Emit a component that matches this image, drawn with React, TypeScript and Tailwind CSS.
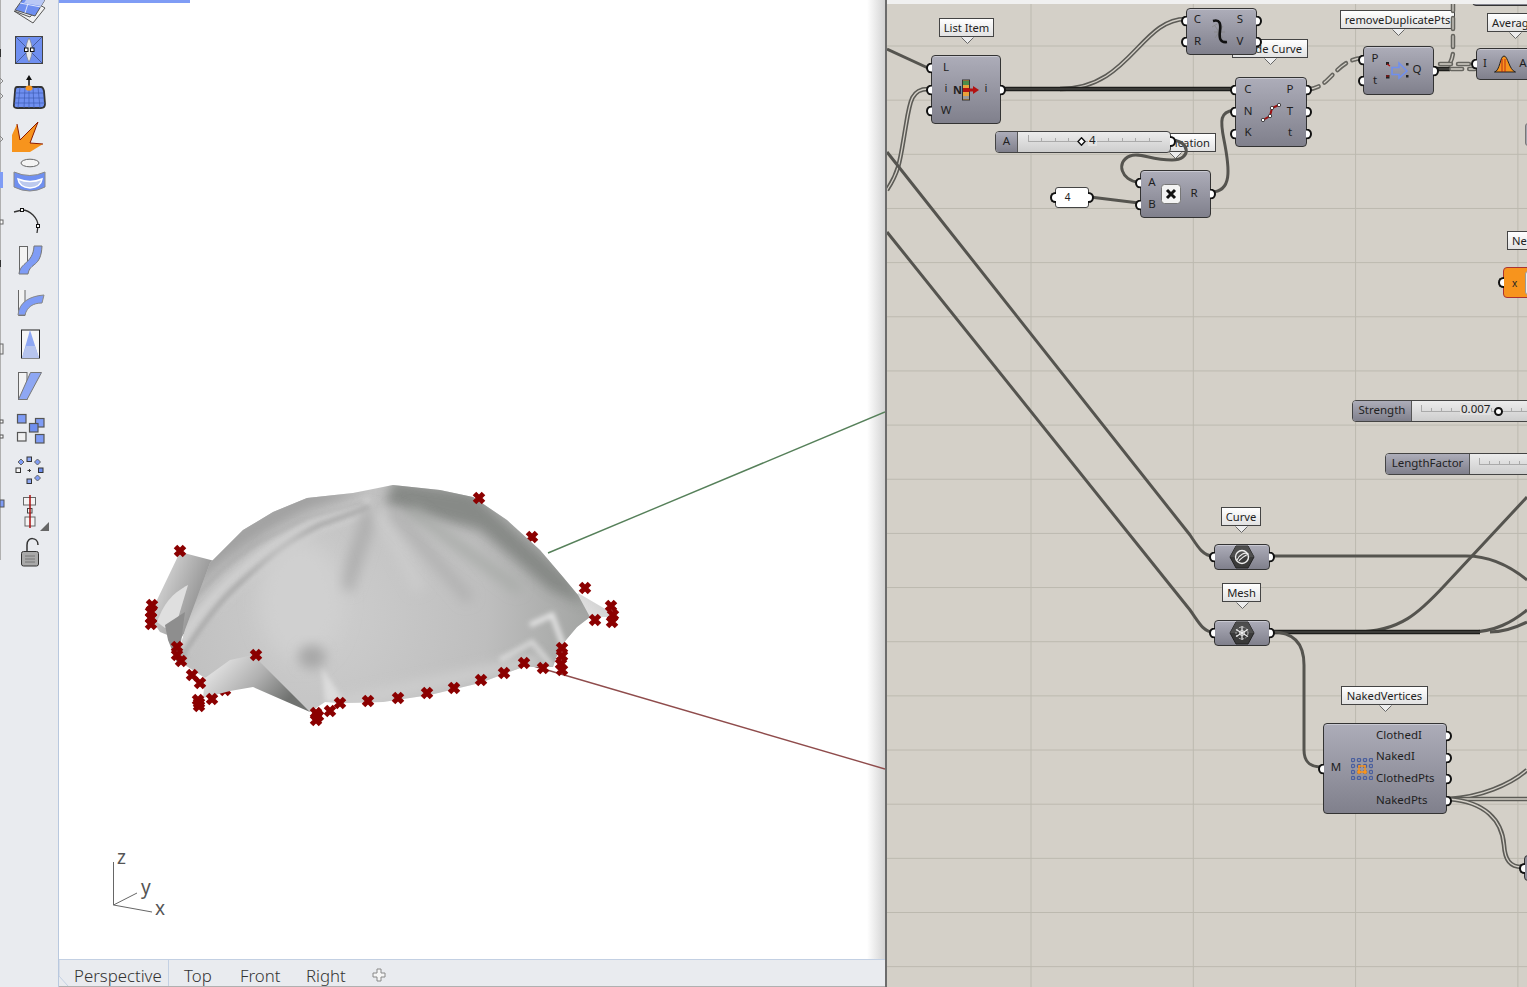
import React from "react";

const FONT = "font-['Noto_Sans','Open_Sans',sans-serif]";

// ---------- toolbar icons, drawn in page coordinates (viewBox follows the slot) ----------
const toolIcons: React.ReactNode[] = [
  <g key="0" stroke="#555" strokeWidth="1">
    <path d="M14 11L33 23L45 8L40 5L30 17L14 11Z" fill="#f2f2f2" />
    <path d="M15 10L25 -4L46 -2L35 16Z" fill="#6f8ff0" />
    <path d="M20 3L41 7M30 -3L25 13" stroke="#dfe6fb" />
    <path d="M28 -3L46 -2L41 6L24 3Z" fill="#b9c8f5" stroke="none" />
  </g>,
  <g key="1">
    <rect x="15.5" y="36.5" width="27" height="27" fill="#6f8ff0" stroke="#444" />
    <path d="M16 37L42 63M42 37L16 63" stroke="#3e4f86" strokeWidth="0.8" />
    <path d="M29 38C33 45 33 55 29 62C25 55 25 45 29 38Z" fill="#e8e8e8" stroke="#777" strokeWidth="0.6" />
    <rect x="24.5" y="48" width="3.5" height="3.5" fill="#fff" stroke="#111" />
    <rect x="30.5" y="48" width="3.5" height="3.5" fill="#fff" stroke="#111" />
  </g>,
  <g key="2">
    <path d="M29 88V79" stroke="#111" strokeWidth="1.5" />
    <path d="M26 80L29 75L32 80Z" fill="#111" />
    <path d="M17 87H41Q43 87 44 91L45 104Q45 108 41 108H17Q13 108 14 104L15 91Q15 87 17 87Z" fill="#6f8ff0" stroke="#333" strokeWidth="1.8" />
    <path d="M15 93H43M15 98H44M14 103H45M20 87L18 108M25 87L24 108M29 87V108M33 87L34 108M38 87L40 108" stroke="#3e5bb5" strokeWidth="0.7" />
    <ellipse cx="29" cy="88" rx="3.5" ry="2.6" fill="#f7941d" />
  </g>,
  <g key="3">
    <path d="M12 152V135L17 124L20 140L38 122L30 143L43 144L30 152Z" fill="#f7941d" />
    <path d="M17 124L20 140L38 122L30 143L43 144" fill="none" stroke="#8d1a00" strokeWidth="1" />
  </g>,
  <g key="4">
    <ellipse cx="30" cy="163" rx="9" ry="3.8" fill="#f4f4f4" stroke="#666" />
    <path d="M14 172Q30 179 45 172V187Q30 195 14 187Z" fill="#6f8ff0" stroke="#888" />
    <path d="M18 179Q30 184 42 179Q41 187 30 188Q19 187 18 179Z" fill="#bcc9ee" stroke="#fff" strokeWidth="1.5" />
  </g>,
  <g key="5">
    <path d="M14 212L22 210C30 210 38 218 38 226L37 233" fill="none" stroke="#333" strokeWidth="1.3" />
    <rect x="20.5" y="208.5" width="3" height="3" fill="#fff" stroke="#111" />
    <rect x="36.5" y="224.5" width="3" height="3" fill="#fff" stroke="#111" />
  </g>,
  <g key="6">
    <rect x="19.5" y="246.5" width="8" height="27" fill="#f3f3f3" stroke="#666" />
    <path d="M19 274C20 262 33 264 34 246H42C41 268 30 262 28 274Z" fill="#7f9cf5" stroke="#777" />
  </g>,
  <g key="7">
    <path d="M18.5 290V315.5H25V290" fill="#f3f3f3" stroke="#666" />
    <path d="M18 315C19 302 30 296 44 295L42 303C33 303 27 307 25 315Z" fill="#7f9cf5" stroke="#888" />
  </g>,
  <g key="8">
    <rect x="21.5" y="330" width="18" height="28" fill="#f5f5f5" stroke="#222" />
    <path d="M30 330L22 358H39Z" fill="#8ea7f3" />
    <path d="M26 346H35L39 358H22Z" fill="#b6c4ee" />
  </g>,
  <g key="9">
    <rect x="18.5" y="372.5" width="8.5" height="27" fill="#f3f3f3" stroke="#666" />
    <path d="M30.5 372.5H41.5L27 399.5H18.5Z" fill="#8ea7f3" stroke="#777" />
  </g>,
  <g key="10" stroke="#555" strokeWidth="1.2">
    <rect x="17.5" y="414.5" width="8.5" height="8.5" fill="#7f9cf5" />
    <rect x="35.5" y="418.5" width="8.5" height="8.5" fill="#7f9cf5" />
    <rect x="29.5" y="423.5" width="8.5" height="8.5" fill="#6f8ff0" />
    <rect x="17.5" y="432.5" width="8.5" height="8.5" fill="#f0f0f0" />
    <rect x="35.5" y="434.5" width="8.5" height="8.5" fill="#7f9cf5" />
  </g>,
  <g key="11" stroke="#333" strokeWidth="1">
    <rect x="27" y="457" width="4.5" height="4.5" fill="#8ea7f3" />
    <rect x="38.5" y="468" width="4.5" height="4.5" fill="#6f8ff0" />
    <rect x="27" y="479" width="4.5" height="4.5" fill="#8ea7f3" />
    <rect x="16" y="468" width="4.5" height="4.5" fill="#f5f5f5" />
    <path d="M21 459L24 462L21 465L18 462ZM37.500 459L40.500 462L37.500 465L34.500 462ZM37.500 475L40.500 478L37.500 481L34.500 478Z" fill="#7f9cf5" stroke="#666" />
    <path d="M27.500 470.500H31M29.500 469V472" />
  </g>,
  <g key="12">
    <rect x="23.500" y="497.500" width="12" height="7.500" fill="#f4f4f4" stroke="#666" />
    <rect x="27.500" y="508.500" width="4.500" height="4.500" fill="#f4f4f4" stroke="#444" />
    <rect x="25" y="517" width="10" height="9" fill="#f4f4f4" stroke="#666" />
    <path d="M30 495V528" stroke="#a11" strokeWidth="1.5" />
    <path d="M40 531H49V522Z" fill="#666" />
  </g>,
  <g key="13">
    <path d="M27 551L27 545C27 536 38 537 38 545" fill="none" stroke="#333" strokeWidth="1.5" />
    <rect x="21.500" y="551.500" width="17" height="14.500" rx="2" fill="#a9a9a9" stroke="#333" />
    <path d="M25 556H35M25 559H35M25 562H35" stroke="#777" />
  </g>,
];

function Toolbar() {
  return (
    <div className="flex w-[59px] shrink-0 border-r border-[#b9c8de] bg-[#e9ebef]">
      <div className="w-[8px] shrink-0">
        <svg width="8" height="560" viewBox="0 0 8 560">
          <rect x="0" y="0" width="1" height="560" fill="#b0b0b0" />
          <rect x="0" y="172" width="3" height="16" fill="#7f9cf5" />
          <rect x="0" y="49" width="1" height="8" fill="#333" />
          <path d="M0 78L3 81L0 84M0 93L3 96L0 99M0 136L3 139L0 142" fill="none" stroke="#888" />
          <rect x="0" y="220" width="3" height="4" fill="#fff" stroke="#666" />
          <rect x="0" y="260" width="1" height="7" fill="#333" />
          <rect x="0" y="344" width="3" height="10" fill="#eee" stroke="#666" />
          <rect x="0" y="420" width="3" height="3" fill="#fff" stroke="#555" />
          <rect x="0" y="435" width="3" height="3" fill="#fff" stroke="#555" />
          <rect x="0" y="500" width="4" height="7" fill="#7f9cf5" stroke="#555" />
        </svg>
      </div>
      <div className="-mt-[12px] flex flex-col">
        {toolIcons.map((icon, i) => (
          <svg key={i} width="42" height="42" viewBox={`8 ${-12 + i * 42} 42 42`} className="overflow-hidden">
            {icon}
          </svg>
        ))}
      </div>
    </div>
  );
}

// ---------- the mesh in the perspective view ----------
const crossesBack = [[532, 537], [168, 627], [225, 690]];
const crosses = [
  [479, 498], [585, 588], [611, 606], [613, 615], [612, 622], [595, 620], [180, 551],
  [152, 605], [151, 612], [151, 618], [151, 624], [177, 647], [177, 655], [181, 661], [192, 675],
  [200, 683], [212, 699], [198, 700], [199, 706], [199, 703], [256, 655], [316, 713], [316, 720],
  [318, 716], [330, 711], [340, 703], [368, 701], [398, 698], [427, 693], [454, 688], [481, 680],
  [504, 673], [524, 663], [543, 668], [562, 648], [562, 656], [561, 664], [562, 670],
];

const domeOutline =
  "M177 660L185 630L210 563L243 530L273 512L307 498L353 493L393 485L440 490L473 497L507 520L540 550L563 577L578 595L590 617L577 627L560 647L553 667L523 667L480 683L430 695L383 702L343 703L325 702L310 712L253 660L205 678Z";

function Cross({ x, y }: { x: number; y: number }) {
  return <path d={`M${x - 4.5} ${y - 4.5}L${x + 4.5} ${y + 4.5}M${x - 4.5} ${y + 4.5}L${x + 4.5} ${y - 4.5}`} stroke="#8b0000" strokeWidth="5" />;
}

function Mesh() {
  return (
    <svg width="826" height="958" viewBox="59 0 826 958" className="absolute left-0 top-0">
      <defs>
        <radialGradient id="domeBase" gradientUnits="userSpaceOnUse" cx="320" cy="615" r="280">
          <stop offset="0" stopColor="#cecece" />
          <stop offset="0.6" stopColor="#bebebe" />
          <stop offset="1" stopColor="#a0a2a0" />
        </radialGradient>
        <linearGradient id="flapLow" gradientUnits="userSpaceOnUse" x1="228" y1="655" x2="282" y2="706">
          <stop offset="0" stopColor="#dedede" />
          <stop offset="0.5" stopColor="#b0b0b0" />
          <stop offset="1" stopColor="#707270" />
        </linearGradient>
        <linearGradient id="flapBack" gradientUnits="userSpaceOnUse" x1="160" y1="570" x2="210" y2="590">
          <stop offset="0" stopColor="#d6d6d6" />
          <stop offset="1" stopColor="#8f8f8f" />
        </linearGradient>
        <linearGradient id="flapRight" gradientUnits="userSpaceOnUse" x1="560" y1="640" x2="605" y2="600">
          <stop offset="0" stopColor="#b5b5b5" />
          <stop offset="0.6" stopColor="#e0e0e0" />
          <stop offset="1" stopColor="#cfcfcf" />
        </linearGradient>
        <filter id="wide" x="-40%" y="-40%" width="180%" height="180%"><feGaussianBlur stdDeviation="10" /></filter>
        <filter id="soft" x="-40%" y="-40%" width="180%" height="180%"><feGaussianBlur stdDeviation="6" /></filter>
        <filter id="mid" x="-40%" y="-40%" width="180%" height="180%"><feGaussianBlur stdDeviation="2.500" /></filter>
        <clipPath id="domeClip"><path d={domeOutline} /></clipPath>
      </defs>

      <path d="M548 553L885 412" stroke="#56805a" strokeWidth="1.4" />
      <path d="M530 665L885 769" stroke="#8f4c4c" strokeWidth="1.4" />

      {crossesBack.map(([x, y], i) => <Cross key={i} x={x} y={y} />)}

      <path d="M180 552L230 565L205 600L180 640L160 632L153 622L157 600Z" fill="url(#flapBack)" />
      <path d="M157 622C165 600 175 592 188 585L176 625L165 628Z" fill="#dfdfdf" />
      <path d="M165 625L185 612L178 665L168 640Z" fill="#8e8e8e" />
      <path d="M578 593L607 610L610 617L590 617L577 627L560 647L553 640Z" fill="url(#flapRight)" />

      <path d={domeOutline} fill="url(#domeBase)" />
      <g clipPath="url(#domeClip)">
        <path d="M393 480L473 492L570 580L585 605L550 590L480 530L420 515L385 505Z" fill="#848784" filter="url(#soft)" opacity="0.95" />
        <path d="M165 620C190 590 235 545 310 510L365 492L300 488L210 540Z" fill="#a2a2a2" filter="url(#soft)" />
        <path d="M182 650C200 610 250 565 315 525L372 505" fill="none" stroke="#cfcfcf" strokeWidth="18" filter="url(#mid)" />
        <path d="M173 627C190 600 225 562 263 540L310 517L363 502" fill="none" stroke="#9e9e9e" strokeWidth="3" filter="url(#mid)" opacity="0.7" />
        <path d="M180 660C192 640 215 605 240 583C265 560 295 537 320 525L370 507" fill="none" stroke="#a2a2a2" strokeWidth="5" filter="url(#mid)" opacity="0.9" />
        <path d="M372 508L345 590" stroke="#b0b0b0" strokeWidth="16" filter="url(#soft)" />
        <path d="M378 510L420 590" stroke="#cbcbcb" strokeWidth="14" filter="url(#soft)" />
        <path d="M392 510L470 600" stroke="#b2b2b2" strokeWidth="12" filter="url(#soft)" />
        <path d="M410 510L520 590" stroke="#a9aca9" strokeWidth="10" filter="url(#soft)" />
        <ellipse cx="300" cy="600" rx="40" ry="60" fill="#d0d0d0" filter="url(#wide)" />
        <ellipse cx="312" cy="657" rx="14" ry="12" fill="#a8a8a8" filter="url(#soft)" />
        <path d="M325 702L322 668L345 702Z" fill="#dcdcdc" filter="url(#mid)" />
        <path d="M340 703L540 660" stroke="#cecece" strokeWidth="12" filter="url(#soft)" />
        <path d="M500 660L532 642L553 667" stroke="#e4e4e4" strokeWidth="5" fill="none" filter="url(#mid)" opacity="0.7" />
        <path d="M530 625L552 615L565 650" stroke="#e4e4e4" strokeWidth="5" fill="none" filter="url(#mid)" />
      </g>
      <path d="M253 655L310 712L253 687L230 691L203 698L205 678L230 660Z" fill="url(#flapLow)" />

      {crosses.map(([x, y], i) => <Cross key={i} x={x} y={y} />)}

      <g stroke="#666" strokeWidth="1" fill="none">
        <path d="M113.500 862V905L137 893M113.500 905L152 912" />
      </g>
    </svg>
  );
}

function Viewport() {
  return (
    <div className="flex w-[826px] shrink-0 flex-col">
      <div className="relative h-[959px] overflow-hidden bg-white">
        <div className="absolute right-0 top-0 h-full w-[18px] bg-linear-to-r from-transparent to-[#d3d3d3]" />
        <div className="h-[3px] w-[131px] bg-[#7f9cf5]" />
        <Mesh />
        <span className="absolute left-[58px] top-[848px] text-[19px] leading-none text-[#555]">z</span>
        <span className="absolute left-[82px] top-[878px] text-[19px] leading-none text-[#555]">y</span>
        <span className="absolute left-[96px] top-[899px] text-[19px] leading-none text-[#555]">x</span>
      </div>
      <div className="relative flex h-[28px] items-center border-t border-b border-t-[#c3d0e3] border-b-[#b0b0b0] bg-[#e9ebef] text-[16.8px] font-light text-[#333]">
        <svg width="10" height="26" viewBox="0 0 10 26" className="absolute left-0 top-0">
          <path d="M0 0V16L9 26" fill="none" stroke="#c3d0e3" />
        </svg>
        <span className="ml-[15px] w-[95px] border-r border-[#c3d0e3] pt-[5px] leading-[21px]">Perspective</span>
        <span className="ml-[15px] w-[56px] pt-[5px] leading-[21px]">Top</span>
        <span className="w-[66px] pt-[5px] leading-[21px]">Front</span>
        <span className="w-[66px] pt-[5px] leading-[21px]">Right</span>
        <svg width="14" height="14" viewBox="0 0 14 14" className="mt-[4px]">
          <path d="M5 1H9V5H13V9H9V13H5V9H1V5H5Z" fill="#f5f5f5" stroke="#888" />
        </svg>
      </div>
    </div>
  );
}

// ---------- grasshopper canvas ----------
function Wire({ d, kind = "plain" }: { d: string; kind?: "plain" | "double" | "tree" | "dash" }) {
  if (kind === "plain") return <path d={d} fill="none" stroke="#55544f" strokeWidth="3" />;
  if (kind === "double")
    return (
      <g fill="none">
        <path d={d} stroke="#5c5b56" strokeWidth="4.5" />
        <path d={d} stroke="#d4d0c8" strokeWidth="1.3" />
      </g>
    );
  if (kind === "tree")
    return (
      <g fill="none">
        <path d={d} stroke="#1d1d1b" strokeWidth="4.5" />
        <path d={d} stroke="#6a6a66" strokeWidth="0.8" />
      </g>
    );
  return (
    <g fill="none" strokeDasharray="11 7" strokeLinecap="round">
      <path d={d} stroke="#66655f" strokeWidth="4.5" />
      <path d={d} stroke="#d4d0c8" strokeWidth="1.3" />
    </g>
  );
}

function Wires() {
  return (
    <svg width="640" height="987" viewBox="887 0 640 987" className="absolute left-0 top-0">
      <Wire d="M887 49L928 68" />
      <Wire kind="double" d="M928 89C912 89 910 100 906 125C900 160 900 170 887 190" />
      <Wire d="M887 152L1190 535C1198 547 1203 556 1213 556" />
      <Wire d="M887 232L1190 610C1198 621 1203 632 1213 632" />
      <Wire kind="double" d="M1060 89C1130 89 1140 19 1186 19" />
      <Wire kind="tree" d="M1004 89H1234" />
      <Wire kind="dash" d="M1308 89C1330 89 1335 60 1362 58" />
      <Wire kind="tree" d="M1434 69H1450" />
      <Wire kind="dash" d="M1453 0V52C1453 62 1445 69 1450 69H1475" />
      <Wire kind="dash" d="M1440 64H1475" />
      <Wire d="M1172 140C1190 141 1192 160 1172 160C1150 160 1140 152 1130 156C1115 162 1122 181 1138 182" />
      <Wire d="M1090 197L1139 203" />
      <Wire d="M1211 192C1232 192 1230 170 1224 140C1220 120 1220 112 1234 110" />
      <Wire d="M1272 556H1466C1490 556 1510 566 1527 580" />
      <Wire d="M1356 632C1400 632 1420 612 1445 585L1527 497" />
      <Wire d="M1470 632C1495 632 1512 622 1527 610" />
      <Wire d="M1490 632C1505 632 1517 627 1527 622" />
      <Wire kind="tree" d="M1272 632H1480" />
      <Wire d="M1272 632C1295 632 1304 645 1304 665V750C1304 762 1310 767 1322 767" />
      <Wire kind="double" d="M1449 799C1480 797 1510 785 1527 770" />
      <Wire kind="double" d="M1449 799H1527" />
      <Wire kind="double" d="M1449 799C1485 802 1502 820 1504 845C1505 860 1510 867 1522 867" />
    </svg>
  );
}

function Tag({ text, className }: { text: string; className: string }) {
  return (
    <div className={`absolute flex h-[19px] items-center whitespace-nowrap border border-[#444] bg-linear-to-b from-white to-[#e2e2e2] text-[11.2px] leading-none text-[#222] ${className}`}>
      {text}
      <svg width="13" height="8" viewBox="0 0 13 8" className="absolute left-1/2 top-[17px] -ml-[6px]">
        <path d="M0 1H13L6.500 7.500Z" fill="#ececec" />
        <path d="M0.500 1.500L6.500 7.500L12.500 1.500" fill="none" stroke="#666" />
      </svg>
    </div>
  );
}

function Node({
  className,
  inputs,
  outputs,
  lw,
  rw,
  start,
  children,
}: {
  className: string;
  inputs: string[];
  outputs: string[];
  lw: string;
  rw: string;
  start?: boolean;
  children?: React.ReactNode;
}) {
  return (
    <div className={`absolute flex items-center rounded-[4px] border border-[#333] bg-linear-to-b from-[#adadb9] to-[#80808c] text-[11.5px] leading-none text-[#1e1e1e] shadow-[inset_0_1px_0_#c9c9d2] ${className}`}>
      <div className="flex h-full flex-col justify-center">
        {inputs.map((l, i) => (
          <div key={i} className={`relative flex h-[21.7px] items-center justify-center pb-[3px] ${lw}`}>
            <span className="absolute -left-[6px] top-1/2 h-[11px] w-[6px] -translate-y-1/2 rounded-l-full border-2 border-r-0 border-[#111] bg-white" />
            {l}
          </div>
        ))}
      </div>
      <div className="flex w-0 min-w-0 flex-1 items-center justify-center">{children}</div>
      <div className="flex h-full flex-col justify-center">
        {outputs.map((l, i) => (
          <div key={i} className={`relative flex h-[21.7px] items-center pb-[3px] ${start ? "justify-start" : "justify-center"} ${rw}`}>
            <span className="absolute -right-[6px] top-1/2 h-[11px] w-[6px] -translate-y-1/2 rounded-r-full border-2 border-l-0 border-[#111] bg-white" />
            {l}
          </div>
        ))}
      </div>
    </div>
  );
}

function Rail({ width, ticks }: { width: number; ticks: number }) {
  const marks = Array.from({ length: ticks + 1 }, (_, i) => (i * width) / ticks);
  return (
    <svg width={width} height="8" viewBox={`0 0 ${width} 8`} className="shrink-0">
      <path d={`M0 6.500H${width}`} stroke="#aaa" />
      {marks.map((x, i) => (
        <path key={i} d={`M${Math.round(x) + 0.5} ${i === 0 || i === ticks ? 0 : 3}V7`} stroke="#aaa" />
      ))}
    </svg>
  );
}

function Slider({ name, className, nameClass, children }: { name: string; className: string; nameClass: string; children: React.ReactNode }) {
  return (
    <div className={`absolute flex h-[22px] rounded-[4px] border border-[#444] bg-linear-to-b from-[#ececec] to-[#cdcdcd] text-[11.5px] leading-none text-[#222] ${className}`}>
      <div className={`flex items-center justify-center rounded-l-[3px] border-r border-[#555] bg-linear-to-b from-[#adadb9] to-[#80808c] pb-[2px] ${nameClass}`}>{name}</div>
      <div className="relative flex-1">{children}</div>
    </div>
  );
}

function Hex({ children }: { children: React.ReactNode }) {
  return (
    <svg width="26" height="24" viewBox="0 0 26 24" className="shrink-0">
      <path d="M7 1H19L25 12L19 23H7L1 12Z" fill="#3a3a3a" stroke="#222" />
      <path d="M7 1H19L25 12H1Z" fill="#5c5c5c" opacity="0.6" />
      {children}
    </svg>
  );
}

function GhCanvas() {
  return (
    <div className="relative flex-1 overflow-hidden border-l-2 border-[#6c6c6c] bg-[#d4d0c8] bg-[linear-gradient(#bcb9af_1px,transparent_1px),linear-gradient(90deg,#bcb9af_1px,transparent_1px)] bg-[size:162.3px_54.17px] bg-[position:143.500px_45.500px]">
      <Tag text="List Item" className="left-[52px] top-[18px] w-[55px] justify-center" />
      <Tag text="de Curve" className="left-[345px] top-[39px] w-[76px] justify-end pr-[5px]" />
      <Tag text="ication" className="left-[247px] top-[133px] w-[82px] justify-end pr-[5px]" />
      <Tag text="removeDuplicatePts" className="left-[453px] top-[10px] w-[115px] justify-center" />
      <Tag text="Averag" className="left-[600px] top-[13px] w-[56px] justify-start pl-[4px]" />
      <Tag text="Ne" className="left-[620px] top-[231px] w-[60px] justify-start pl-[4px]" />
      <Tag text="Curve" className="left-[334px] top-[507px] w-[40px] justify-center" />
      <Tag text="Mesh" className="left-[335px] top-[583px] w-[39px] justify-center" />
      <Tag text="NakedVertices" className="left-[454px] top-[686px] w-[87px] justify-center" />

      <Wires />

      <div className="absolute left-[585px] -top-[6px] h-[12px] w-[90px] rounded-[4px] border border-[#333] bg-[#85858f]" />

      <Node className="left-[44px] top-[55px] h-[69px] w-[70px]" inputs={["L", "i", "W"]} outputs={["i"]} lw="w-[28px]" rw="w-[28px]">
        <svg width="28" height="22" viewBox="0 0 28 22" className="shrink-0">
          <rect x="10.500" y="1" width="7" height="20" fill="#e9a23b" stroke="#333" />
          <rect x="11" y="2" width="6" height="4" fill="#4c8c4a" />
          <rect x="11" y="9" width="6" height="4" fill="#b31212" />
          <rect x="11" y="17" width="6" height="3" fill="#999" />
          <path d="M16 9.500H21V7L27 11L21 15V12.500H16Z" fill="#b31212" />
          <text x="1" y="15" fontSize="11" fontWeight="700" fill="#222">N</text>
        </svg>
      </Node>

      <Node className="left-[299px] top-[8px] h-[47px] w-[71px]" inputs={["C", "R"]} outputs={["S", "V"]} lw="w-[21px]" rw="w-[32px]">
        <svg width="20" height="28" viewBox="0 0 20 28" className="ml-[8px] shrink-0">
          <path d="M2 9L7 6M4 14L15 14M5 20L13 8M13 20L5 8M9 6V22" stroke="#888" strokeWidth="0.8" />
          <path d="M3 3C10 1 11 6 10 13C9 20 10 25 17 24" fill="none" stroke="#111" strokeWidth="2.600" />
        </svg>
      </Node>

      <Node className="left-[348px] top-[77px] h-[70px] w-[72px]" inputs={["C", "N", "K"]} outputs={["P", "T", "t"]} lw="w-[24px]" rw="w-[32px]">
        <svg width="22" height="22" viewBox="0 0 22 22" className="ml-[8px] shrink-0">
          <path d="M3 19L10 15L12 7L19 4" fill="none" stroke="#9c1010" strokeWidth="2" />
          <g fill="#fff" stroke="#222" strokeWidth="0.8">
            <circle cx="3" cy="19" r="1.700" />
            <circle cx="10" cy="15" r="1.700" />
            <circle cx="12" cy="7" r="1.700" />
            <circle cx="19" cy="4" r="1.700" />
          </g>
        </svg>
      </Node>

      <Node className="left-[476px] top-[46px] h-[49px] w-[71px]" inputs={["P", "t"]} outputs={["Q"]} lw="w-[22px]" rw="w-[32px]">
        <svg width="26" height="20" viewBox="0 0 26 20" className="ml-[8px] shrink-0">
          <path d="M7 6.500H14V2L22 10L14 17V13.500H7Z" fill="none" stroke="#6f8ff0" strokeWidth="1.500" />
          <g fill="#222">
            <rect x="1" y="1" width="3" height="3" />
            <rect x="1" y="14" width="3.500" height="3.500" />
            <rect x="21" y="2" width="2.500" height="2.500" />
            <rect x="21" y="14" width="2.500" height="2.500" />
          </g>
          <path d="M2 3L5 5M1 15H4" stroke="#b31212" strokeWidth="1.200" />
        </svg>
      </Node>

      <Node className="left-[589px] top-[48px] h-[32px] w-[64px]" inputs={["I"]} outputs={["A"]} lw="w-[16px]" rw="w-[32px]">
        <svg width="22" height="18" viewBox="0 0 22 18" className="ml-[10px] shrink-0">
          <path d="M0.500 17C6 16 6 1 10 1C14 1 15 15 21.500 17Z" fill="#f7941d" stroke="#222" />
          <path d="M8 4V17M11 4V17" stroke="#b31212" strokeWidth="0.800" />
        </svg>
      </Node>

      <Slider name="A" className="left-[108px] top-[131px] w-[176px]" nameClass="w-[22px]">
        <span className="absolute -right-[6px] top-[4px] h-[11px] w-[6px] rounded-r-full border-2 border-l-0 border-[#111] bg-white" />
        <div className="absolute left-[10px] top-[3px]"><Rail width={134} ticks={10} /></div>
        <svg width="9" height="9" viewBox="0 0 9 9" className="absolute left-[59px] top-[5px]">
          <path d="M4.500 0.800L8 4.500L4.500 8.200L1 4.500Z" fill="#fff" stroke="#111" strokeWidth="1.400" />
        </svg>
        <span className="absolute left-[70px] top-[2px] bg-[#e3e3e3] px-[1px]">4</span>
      </Slider>

      <Node className="left-[253px] top-[170px] h-[48px] w-[71px]" inputs={["A", "B"]} outputs={["R"]} lw="w-[22px]" rw="w-[32px]">
        <svg width="22" height="22" viewBox="0 0 22 22" className="shrink-0">
          <rect x="1.500" y="1.500" width="19" height="19" rx="3" fill="#f3f3f3" stroke="#777" />
          <path d="M7 7L15 15M15 7L7 15" stroke="#111" strokeWidth="3" />
        </svg>
      </Node>

      <div className="absolute left-[168px] top-[187px] flex h-[21px] w-[34px] items-center justify-center rounded-[3px] border border-[#444] bg-white pb-[2px] pr-[9px] text-[10px] leading-none text-[#222]">
        <span className="absolute -left-[6px] top-[4px] h-[11px] w-[6px] rounded-l-full border-2 border-r-0 border-[#111] bg-white" />
        4
        <span className="absolute -right-[6px] top-[4px] h-[11px] w-[6px] rounded-r-full border-2 border-l-0 border-[#111] bg-white" />
      </div>

      <div className="absolute left-[616px] top-[267px] flex h-[31px] w-[40px] items-center rounded-[4px] border border-[#a33] bg-[#f7941d] text-[10px] leading-none text-[#222]">
        <span className="absolute -left-[6px] top-[9px] h-[11px] w-[6px] rounded-l-full border-2 border-r-0 border-[#111] bg-white" />
        <span className="ml-[8px]">x</span>
        <span className="ml-[8px] h-[24px] w-[20px] rounded-[3px] border border-[#999] bg-[#eee]" />
      </div>

      <div className="absolute left-[638px] top-[123px] h-[23px] w-[20px] rounded-[3px] border border-[#777] bg-[#a3a3ad]" />

      <Slider name="Strength" className="left-[465px] top-[400px] w-[200px]" nameClass="w-[59px]">
        <div className="absolute left-[9px] top-[4px]"><Rail width={120} ticks={12} /></div>
        <span className="absolute left-[48px] top-[2px] bg-[#e0e0e0] px-[1px]">0.007</span>
        <span className="absolute left-[82px] top-[6px] h-[9px] w-[9px] rounded-full border-2 border-[#111] bg-white" />
      </Slider>

      <Slider name="LengthFactor" className="left-[498px] top-[453px] w-[180px]" nameClass="w-[84px]">
        <div className="absolute left-[9px] top-[4px]"><Rail width={100} ticks={10} /></div>
      </Slider>

      <Node className="left-[327px] top-[544px] h-[26px] w-[56px]" inputs={[""]} outputs={[""]} lw="w-[10px]" rw="w-[10px]">
        <Hex>
          <circle cx="13" cy="12" r="6.500" fill="none" stroke="#eee" strokeWidth="1.400" />
          <path d="M8 15C11 9 16 7 19 9C16 11 12 13 10 16" fill="none" stroke="#eee" strokeWidth="1.200" />
        </Hex>
      </Node>

      <Node className="left-[327px] top-[620px] h-[26px] w-[56px]" inputs={[""]} outputs={[""]} lw="w-[10px]" rw="w-[10px]">
        <Hex>
          <path d="M13 5V19M7 8.500L19 15.500M19 8.500L7 15.500" stroke="#eee" strokeWidth="1.200" />
          <circle cx="13" cy="12" r="6" fill="none" stroke="#ddd" strokeWidth="0.800" strokeDasharray="2 1.500" />
          <circle cx="13" cy="12" r="2.500" fill="none" stroke="#eee" strokeWidth="0.800" />
        </Hex>
      </Node>

      <Node className="left-[436px] top-[723px] h-[91px] w-[124px]" inputs={["M"]} outputs={["ClothedI", "NakedI", "ClothedPts", "NakedPts"]} lw="w-[24px]" rw="w-[70px]" start>
        <svg width="22" height="22" viewBox="0 0 22 22" className="shrink-0">
          <g fill="none" stroke="#4a5f9e" strokeWidth="1.200">
            {[2, 8, 14, 20].map((y) =>
              [2, 8, 14, 20].map((x) => <circle key={`${x}-${y}`} cx={x} cy={y} r="1.700" />)
            )}
          </g>
          <path d="M8 8H14V14H8Z" fill="none" stroke="#f7941d" strokeWidth="1.500" />
          <circle cx="8" cy="14" r="2" fill="#f7941d" />
          <circle cx="14" cy="14" r="2" fill="#f7941d" />
        </svg>
      </Node>

      <div className="absolute left-[637px] top-[855px] h-[26px] w-[30px] rounded-[4px] border border-[#333] bg-[#8f8f9b]">
        <span className="absolute -left-[6px] top-[7px] h-[11px] w-[6px] rounded-l-full border-2 border-r-0 border-[#111] bg-white" />
      </div>

      <div className="absolute left-0 top-0 h-[4px] w-full bg-[#f0f0f0]" />
    </div>
  );
}

export default function App() {
  return (
    <div className={`flex h-[987px] w-[1527px] overflow-hidden bg-white ${FONT}`}>
      <Toolbar />
      <Viewport />
      <GhCanvas />
    </div>
  );
}
